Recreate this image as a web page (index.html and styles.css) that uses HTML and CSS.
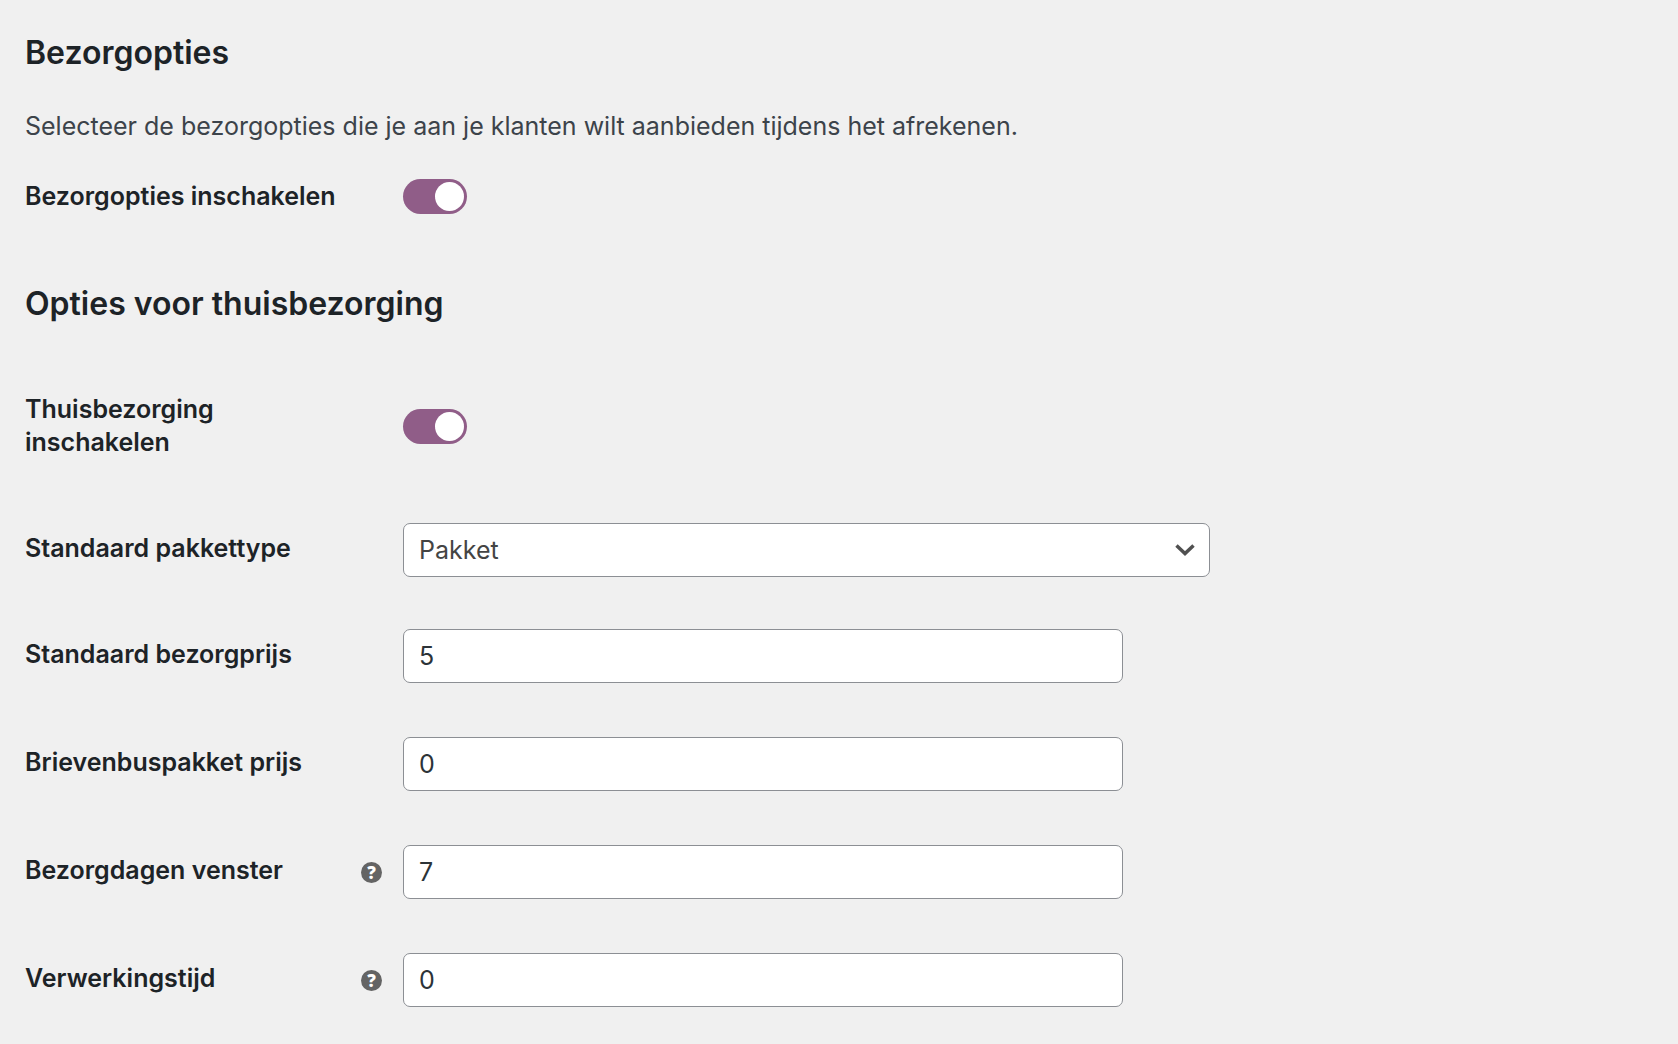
FILE: index.html
```html
<!DOCTYPE html>
<html lang="nl">
<head>
  <meta charset="utf-8">
  <meta name="viewport" content="width=device-width, initial-scale=1">
  <title>Bezorgopties</title>
  <link rel="stylesheet" href="styles.css">
</head>
<body>
  <main>
    <form class="settings">
      <section class="section">
        <h2 class="section-title">Bezorgopties</h2>
        <p class="section-intro">Selecteer de bezorgopties die je aan je klanten wilt aanbieden tijdens het afrekenen.</p>
        <div class="row">
          <label class="label" for="delivery-enabled">Bezorgopties inschakelen</label>
          <input class="toggle" type="checkbox" role="switch" id="delivery-enabled" checked>
        </div>
      </section>

      <section class="section">
        <h2 class="section-title">Opties voor thuisbezorging</h2>
        <div class="fields">
          <div class="row">
            <label class="label" for="home-enabled">Thuisbezorging inschakelen</label>
            <input class="toggle" type="checkbox" role="switch" id="home-enabled" checked>
          </div>
          <div class="row row-select">
            <label class="label" for="package-type">Standaard pakkettype</label>
            <div class="select-wrap">
              <select class="control select" id="package-type">
                <option selected>Pakket</option>
                <option>Brievenbuspakket</option>
              </select>
              <svg class="chevron" viewBox="0 0 40 24" aria-hidden="true"><path d="M3 3 20 19 37 3"/></svg>
            </div>
          </div>
          <div class="row row-input">
            <label class="label" for="delivery-price">Standaard bezorgprijs</label>
            <input class="control" type="text" inputmode="decimal" id="delivery-price" value="5">
          </div>
          <div class="row row-input">
            <label class="label" for="mailbox-price">Brievenbuspakket prijs</label>
            <input class="control" type="text" inputmode="decimal" id="mailbox-price" value="0">
          </div>
          <div class="row row-input">
            <label class="label" for="delivery-window">Bezorgdagen venster</label>
            <button class="help" type="button">?</button>
            <input class="control" type="text" inputmode="numeric" id="delivery-window" value="7">
          </div>
          <div class="row row-input">
            <label class="label" for="drop-off-delay">Verwerkingstijd</label>
            <button class="help" type="button">?</button>
            <input class="control" type="text" inputmode="numeric" id="drop-off-delay" value="0">
          </div>
        </div>
      </section>
    </form>
  </main>
</body>
</html>
```
FILE: styles.css
```css
* {
  box-sizing: border-box;
}

body {
  margin: 0;
  background: #f0f0f0;
  color: #1d2327;
  font-family: Inter, "Liberation Sans", sans-serif;
  font-size: 25px;
  line-height: 33px;
}

.settings {
  display: flex;
  flex-direction: column;
  gap: 70px;
  padding: 33px 25px 10px;
}

.section-title {
  margin: 0;
  font-size: 32px;
  font-weight: 600;
  line-height: 40px;
}

.section-intro {
  margin: 37px 0 36px;
  color: #3c434a;
}

.fields {
  padding-top: 69px;
}

/* label column, help column, control column */
.row {
  display: grid;
  grid-template-columns: 320px 42px minmax(0, 1fr);
  column-gap: 8px;
  align-items: center;
}

.row-select {
  padding: 64px 0 26px;
}

.row-input {
  padding: 26px 0 28px;
}

.label {
  grid-column: 1;
  font-weight: 600;
}

.row-select .label,
.row-input .label {
  padding-bottom: 3px;
}

.help {
  grid-column: 2;
  width: 21px;
  height: 21px;
  margin-left: 8px;
  padding: 0;
  border: 0;
  border-radius: 50%;
  background: #646464;
  color: #fff;
  font: 800 17px/21px "Open Sans", sans-serif;
  text-align: center;
}

.toggle {
  grid-column: 3;
  display: flex;
  align-items: center;
  width: 64px;
  height: 35px;
  margin: 0;
  padding: 3px;
  border-radius: 18px;
  background: #8c8f94;
  appearance: none;
}

.toggle::before {
  content: "";
  width: 29px;
  height: 29px;
  border-radius: 50%;
  background: #fff;
}

.toggle:checked {
  justify-content: flex-end;
  background: #905d88;
}

.control {
  grid-column: 3;
  width: 100%;
  max-width: 720px;
  height: 54px;
  margin: 0;
  padding: 0 15px;
  border: 1px solid #8c8f94;
  border-radius: 7px;
  background: #fff;
  color: #2c3338;
  font: inherit;
}

.select-wrap {
  grid-column: 3;
  display: grid;
  align-items: center;
  max-width: 807px;
}

.select {
  grid-area: 1 / 1;
  max-width: none;
  color: #444;
  appearance: none;
}

.chevron {
  grid-area: 1 / 1;
  justify-self: end;
  width: 20px;
  height: 12px;
  margin-right: 15px;
  fill: none;
  stroke: #505050;
  stroke-width: 7;
  pointer-events: none;
}
```
